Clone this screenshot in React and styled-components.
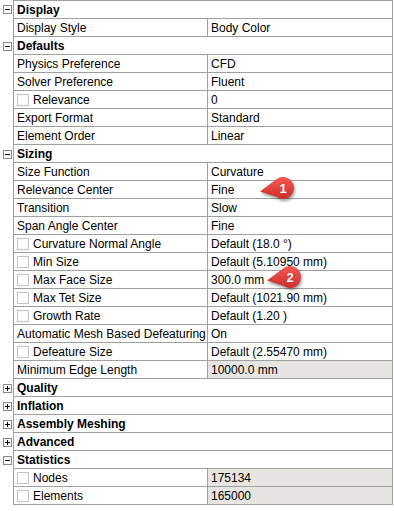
import React from "react";
import styled, { createGlobalStyle, css } from "styled-components";

const GlobalStyle = createGlobalStyle`
  html, body {
    margin: 0;
    padding: 0;
    background: #ffffff;
  }
  body {
    font-family: "Liberation Sans", Arial, sans-serif;
    font-size: 12px;
    color: #000000;
  }
`;

const GRID = "#a0a0a0";

const Sheet = styled.div`
  position: relative;
  width: 394px;
  display: flex;
  flex-direction: column;
`;

const Row = styled.div`
  display: grid;
  grid-template-columns: 13px 194px 186px;
  height: 18px;

  &:first-child > div:not(:first-child) {
    border-top: 1px solid ${GRID};
  }
  &:first-child {
    height: 19px;
  }
`;

const Gutter = styled.div`
  display: flex;
  align-items: center;
  padding-left: 3px;
`;

const ExpandBox = styled.span`
  position: relative;
  box-sizing: border-box;
  width: 9px;
  height: 9px;
  border: 1px solid #8a8a8a;
  background: #ffffff;

  &::before {
    content: "";
    position: absolute;
    left: 1px;
    top: 3px;
    width: 5px;
    height: 1px;
    background: #000000;
  }

  ${({ $open }) =>
    !$open &&
    css`
      &::after {
        content: "";
        position: absolute;
        left: 3px;
        top: 1px;
        width: 1px;
        height: 5px;
        background: #000000;
      }
    `}
`;

const Cell = styled.div`
  box-sizing: border-box;
  display: flex;
  align-items: center;
  gap: 4px;
  border-left: 1px solid ${GRID};
  border-bottom: 1px solid ${GRID};
  padding-left: 3px;
  white-space: nowrap;
  overflow: hidden;
  background: ${({ $readonly }) => ($readonly ? "#e6e5e2" : "#ffffff")};
`;

const ValueCell = styled(Cell)`
  border-right: 1px solid ${GRID};
`;

const HeaderCell = styled(Cell)`
  grid-column: 2 / 4;
  border-right: 1px solid ${GRID};
  font-weight: bold;
`;

const CheckBox = styled.span`
  box-sizing: border-box;
  flex: none;
  width: 12px;
  height: 12px;
  border: 1px solid #c4c4c4;
  background: #ffffff;
`;

const Marker = styled.svg`
  position: absolute;
  left: ${({ $x }) => $x}px;
  top: ${({ $y }) => $y}px;
  width: 40px;
  height: 26px;
  overflow: visible;
  filter: drop-shadow(1px 2px 1.5px rgba(0, 0, 0, 0.4));
`;

const sections = [
  { title: "Display", open: true, rows: [["Display Style", "Body Color"]] },
  {
    title: "Defaults",
    open: true,
    rows: [
      ["Physics Preference", "CFD"],
      ["Solver Preference", "Fluent"],
      ["Relevance", "0", { check: true }],
      ["Export Format", "Standard"],
      ["Element Order", "Linear"],
    ],
  },
  {
    title: "Sizing",
    open: true,
    rows: [
      ["Size Function", "Curvature"],
      ["Relevance Center", "Fine"],
      ["Transition", "Slow"],
      ["Span Angle Center", "Fine"],
      ["Curvature Normal Angle", "Default (18.0 °)", { check: true }],
      ["Min Size", "Default (5.10950 mm)", { check: true }],
      ["Max Face Size", "300.0 mm", { check: true }],
      ["Max Tet Size", "Default (1021.90 mm)", { check: true }],
      ["Growth Rate", "Default (1.20 )", { check: true }],
      ["Automatic Mesh Based Defeaturing", "On"],
      ["Defeature Size", "Default (2.55470 mm)", { check: true }],
      ["Minimum Edge Length", "10000.0 mm", { readonly: true }],
    ],
  },
  { title: "Quality", open: false, rows: [] },
  { title: "Inflation", open: false, rows: [] },
  { title: "Assembly Meshing", open: false, rows: [] },
  { title: "Advanced", open: false, rows: [] },
  {
    title: "Statistics",
    open: true,
    rows: [
      ["Nodes", "175134", { check: true, readonly: true }],
      ["Elements", "165000", { check: true, readonly: true }],
    ],
  },
];

const Callout = ({ x, y, n }) => (
  <Marker $x={x} $y={y} viewBox="0 0 40 26">
    <defs>
      <linearGradient id={`cg${n}`} x1="0" y1="0" x2="0" y2="1">
        <stop offset="0" stopColor="#f45b53" />
        <stop offset="1" stopColor="#cb2e2a" />
      </linearGradient>
    </defs>
    <path
      d="M2 15.5 L18.4 3.2 A11 11 0 1 1 18.4 20.8 Z"
      fill={`url(#cg${n})`}
    />
    <text
      x="25"
      y="16.5"
      textAnchor="middle"
      fill="#ffffff"
      fontFamily="Liberation Sans, Arial, sans-serif"
      fontSize="13"
      fontWeight="bold"
    >
      {n}
    </text>
  </Marker>
);

export default function App() {
  const rows = [];
  sections.forEach((s) => {
    rows.push(
      <Row key={s.title}>
        <Gutter>
          <ExpandBox $open={s.open} />
        </Gutter>
        <HeaderCell>{s.title}</HeaderCell>
      </Row>
    );
    s.rows.forEach(([label, value, opts = {}]) => {
      rows.push(
        <Row key={s.title + label}>
          <Gutter />
          <Cell>
            {opts.check && <CheckBox />}
            {label}
          </Cell>
          <ValueCell $readonly={opts.readonly}>{value}</ValueCell>
        </Row>
      );
    });
  });

  return (
    <>
      <GlobalStyle />
      <Sheet>
        {rows}
        <Callout x={258} y={176} n={1} />
        <Callout x={265} y={265} n={2} />
      </Sheet>
    </>
  );
}
